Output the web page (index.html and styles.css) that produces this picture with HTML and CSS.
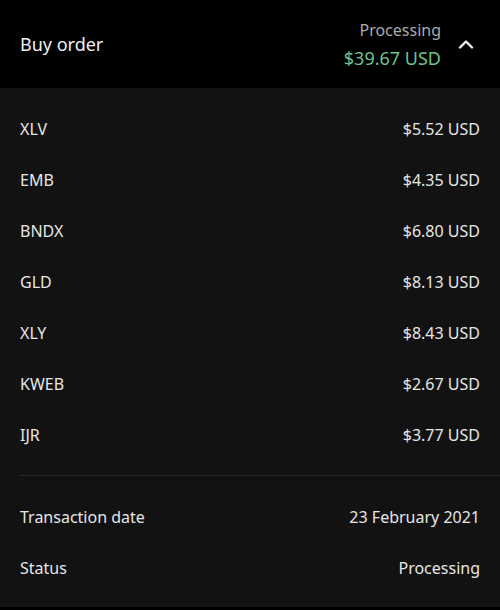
FILE: index.html
```html
<!DOCTYPE html>
<html lang="en">
<head>
    <meta charset="UTF-8">
    <meta name="viewport" content="width=device-width, initial-scale=1.0">
    <title>Buy order</title>
    <link rel="stylesheet" href="styles.css">
</head>
<body>
    <div class="order">
        <!-- Header -->
        <div class="order-header">
            <div class="order-title">Buy order</div>
            <div class="order-summary">
                <div class="order-state">Processing</div>
                <div class="order-total">$39.67 USD</div>
            </div>
            <svg class="chevron" width="16" height="10" viewBox="0 0 16 10">
                <path d="M2 8.5 L8 2.5 L14 8.5" fill="none" stroke="#eee" stroke-width="2.4" stroke-linecap="round" stroke-linejoin="round"/>
            </svg>
        </div>

        <!-- Holdings -->
        <div class="order-body">
            <div class="rows">
                <div class="row"><span>XLV</span><span>$5.52 USD</span></div>
                <div class="row"><span>EMB</span><span>$4.35 USD</span></div>
                <div class="row"><span>BNDX</span><span>$6.80 USD</span></div>
                <div class="row"><span>GLD</span><span>$8.13 USD</span></div>
                <div class="row"><span>XLY</span><span>$8.43 USD</span></div>
                <div class="row"><span>KWEB</span><span>$2.67 USD</span></div>
                <div class="row"><span>IJR</span><span>$3.77 USD</span></div>
            </div>

            <div class="divider"></div>

            <!-- Details -->
            <div class="rows">
                <div class="row"><span>Transaction date</span><span>23 February 2021</span></div>
                <div class="row"><span>Status</span><span>Processing</span></div>
            </div>
        </div>
    </div>
</body>
</html>
```

FILE: styles.css
```css
body {
    margin: 0;
    padding: 0;
    background-color: #000;
    font-family: "Noto Sans", "Open Sans", sans-serif;
    color: #e8e8e8;
}

.order {
    width: 500px;
}

.order-header {
    height: 88px;
    display: flex;
    align-items: center;
    padding: 0 20px;
    background-color: #000;
}

.order-title {
    flex: 1;
    font-size: 18px;
    color: #eee;
}

.order-summary {
    text-align: right;
    line-height: 28px;
    margin-right: 17px;
}

.order-state {
    font-size: 16px;
    color: #aaa;
}

.order-total {
    font-size: 18px;
    color: #6cc48f;
}

.chevron {
    margin-right: 6px;
}

.order-body {
    background-color: #121212;
    padding: 16px 0 16px 20px;
    height: 487px;
}

.rows {
    display: flex;
    flex-direction: column;
}

.row {
    display: flex;
    justify-content: space-between;
    height: 51px;
    line-height: 51px;
    font-size: 16px;
    padding-right: 20px;
    color: #e6e6e6;
}

.divider {
    height: 1px;
    background-color: #2a2a2a;
    margin: 14px 0 16px;
}
```
